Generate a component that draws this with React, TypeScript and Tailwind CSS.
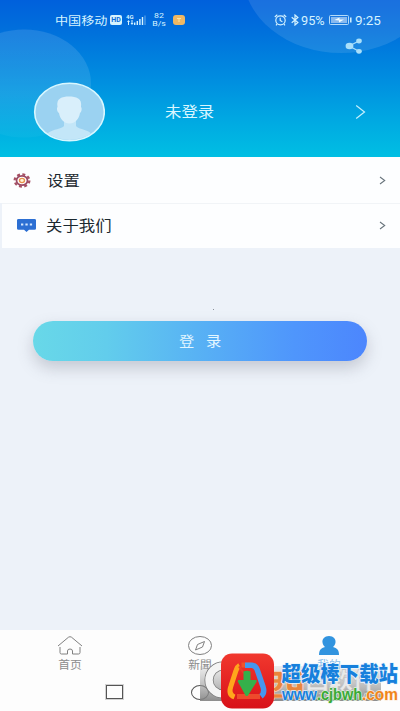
import type { ReactNode } from 'react';

// Wide text: the glyphs are stretched horizontally inside a box of fixed width.
function Wide({ className = '', children }: { className?: string; children: ReactNode }) {
  return (
    <span className={`inline-block origin-left whitespace-nowrap ${className}`}>{children}</span>
  );
}

function StatusBar() {
  return (
    <div className="relative flex h-10 items-center pl-[55px] text-[#d5f3ff]">
      <div className="w-[55px] pt-[3px] text-[11.5px] leading-none">
        <Wide className="scale-x-[1.14]">中国移动</Wide>
      </div>
      <div className="flex h-[10px] w-[12px] items-center justify-center rounded-[2px] bg-[#d5f3ff] text-[7px] font-bold leading-none text-[#0a6bd6]">
        HD
      </div>
      <svg className="ml-1 h-[12px] w-[20px]" viewBox="0 0 20 12" fill="currentColor">
        <text x="0" y="4.8" fontSize="6" fontWeight="700" textLength="7.5">4G</text>
        <path d="M1 8l1.500-2L4 8H3v3H2V8zM4.500 9h1V6h1v3h1L6 11zM8 8.500h1.400V11H8zM10.600 7H12v4h-1.400zM13.200 5h1.400v6h-1.400zM15.800 3h1.400v8h-1.400z" />
        <path d="M18.300 1.500h1.400V11h-1.400z" opacity=".35" />
      </svg>
      <div className="ml-[5px] w-[16px] text-center text-[8px] leading-[8.5px]">
        <div className="origin-center scale-x-110">82</div>
        <div className="origin-center scale-x-110">B/s</div>
      </div>
      <div className="ml-[6px] flex h-[10px] w-[12px] items-center justify-center rounded-[3px] bg-[#efb864]">
        <svg className="h-[6px] w-[6px]" viewBox="0 0 6 6" fill="none" stroke="#ffe4a0">
          <path d="M1 1.500h4M3 1.500V5" />
        </svg>
      </div>
      <svg className="ml-[89px] h-[12px] w-[13px]" viewBox="0 0 13 12" fill="none" stroke="currentColor" strokeWidth="1.200">
        <ellipse cx="6.500" cy="6.300" rx="4.700" ry="4.500" />
        <path d="M.8 3L3.300.8M12.200 3L9.700.8M6.200 3.700v2.800l2.200 1.200M3 10.200l-1 1.100M10 10.200l1 1.100" />
      </svg>
      <svg className="ml-[4px] h-[12px] w-[8px]" viewBox="0 0 8 12" fill="none" stroke="currentColor" strokeWidth="1.200">
        <path d="M.7 3.200l6.200 5.300L4 11V1l2.900 2.500L.7 8.800" />
      </svg>
      <div className="ml-[2px] w-[28px] pt-[2px] text-[12px] leading-none">
        <Wide className="scale-x-[1.06]">95%</Wide>
      </div>
      <svg className="h-[10px] w-[23px]" viewBox="0 0 23 10" fill="none">
        <rect x=".5" y=".5" width="19" height="9" rx="1" stroke="#b5dcfa" />
        <rect x="2" y="2" width="16" height="6" fill="#88b9ef" />
        <path d="M5.500 5l5-2.500V4.500h4.500l-5 3V5.500z" fill="#f1fcff" />
        <path d="M21.800 2.500v5" stroke="#d5f3ff" strokeWidth="1.500" />
      </svg>
      <div className="ml-[3px] w-[26px] pt-[2px] text-[12px] leading-none">
        <Wide className="scale-x-[1.12]">9:25</Wide>
      </div>
    </div>
  );
}

function Header() {
  return (
    <header className="relative h-[157px] overflow-hidden bg-[linear-gradient(180deg,#0060dc_0%,#0072dc_22%,#008fe0_52%,#00a8e2_76%,#00bfe3_100%)]">
      <svg className="absolute inset-0 h-[157px] w-[400px]" viewBox="0 0 400 157">
        <defs>
          <linearGradient id="bubble" x1="0" y1="0" x2="0" y2="1">
            <stop offset="0" stopColor="#fff" stopOpacity=".12" />
            <stop offset=".6" stopColor="#fff" stopOpacity=".1" />
            <stop offset="1" stopColor="#fff" stopOpacity=".03" />
          </linearGradient>
        </defs>
        <ellipse cx="24" cy="83.500" rx="67" ry="54" fill="url(#bubble)" />
        <ellipse cx="341" cy="-26" rx="98" ry="79" fill="#fff" fillOpacity=".1" />
      </svg>
      <StatusBar />
      <div className="relative -mt-[2px] flex justify-end pr-[38px]">
        <svg className="h-4 w-[17px]" viewBox="0 0 17 16" fill="#a9dffa" stroke="#a9dffa">
          <path d="M14 3L4 8l10 5.300" fill="none" strokeWidth="1.200" />
          <ellipse cx="4.500" cy="8" rx="3.900" ry="3.300" stroke="none" />
          <ellipse cx="14" cy="3" rx="2.800" ry="2.400" stroke="none" />
          <ellipse cx="14" cy="13.300" rx="2.800" ry="2.400" stroke="none" />
        </svg>
      </div>
      <div className="relative mt-[27px] flex h-[61px] items-center pl-[33px]">
        <svg className="h-[60px] w-[72px]" viewBox="0 0 72 60">
          <defs>
            <clipPath id="face">
              <ellipse cx="36.500" cy="30" rx="34" ry="28" />
            </clipPath>
          </defs>
          <ellipse cx="36.500" cy="30" rx="34.800" ry="28.700" fill="#9bd2f1" stroke="#d8f7ff" strokeWidth="1.600" />
          <g clipPath="url(#face)">
            <path d="M31 39h12v5c2 3 9 3 14 6.500L60 60H13l2-9c5-4 14-4 16-7z" fill="#c3e6f8" />
            <path d="M24.500 25C23 16 29 14.500 36 14.500S49.500 16 48 25c1.200 1 .7 5-1 6-1 6-5 10.500-10.500 10.500S27 37 26 31c-2-1-2.500-5-1.500-6z" fill="#d9effb" />
          </g>
        </svg>
        <div className="ml-[60px] flex-1 pt-[4px] text-[14.500px] leading-none text-[#d9f6ff]">
          <Wide className="scale-x-[1.130]">未登录</Wide>
        </div>
        <svg className="mr-[34px] h-[16px] w-[11px]" viewBox="0 0 11 16" fill="none" stroke="#c5f0fd" strokeWidth="1.200">
          <path d="M1.200 1.500L9.500 8l-8.300 6.500" />
        </svg>
      </div>
    </header>
  );
}

function RowArrow() {
  return (
    <svg className="h-[9px] w-[7px]" viewBox="0 0 7 9" fill="none" stroke="#69747c" strokeWidth="1.100">
      <path d="M1 1l4.700 3.500L1 8" />
    </svg>
  );
}

function GearIcon() {
  return (
    <svg className="h-[15px] w-[18px]" viewBox="0 0 18 15">
      <ellipse cx="9" cy="7.500" rx="7.400" ry="6.100" fill="none" stroke="#a65062" strokeWidth="2.200" strokeDasharray="2.900 2.400" />
      <ellipse cx="9" cy="7.500" rx="5.500" ry="4.700" fill="#fff" stroke="#9b4a66" strokeWidth="1.800" />
      <ellipse cx="9" cy="7.500" rx="2.500" ry="2.100" fill="#fff6d8" stroke="#e8914d" strokeWidth="1.400" />
    </svg>
  );
}

function ChatIcon() {
  return (
    <svg className="h-[13px] w-[19px]" viewBox="0 0 19 13">
      <path d="M1.500 0h16q1.500 0 1.500 1.300v8.200q0 1.300-1.500 1.300H12L9.500 13 7 10.800H1.500Q0 10.800 0 9.500V1.300Q0 0 1.500 0z" fill="#2c6fd3" />
      <path d="M4 4.500h2.300v2H4zM8.400 4.500h2.300v2H8.400zM12.800 4.500h2.300v2h-2.300z" fill="#d4e7ff" />
    </svg>
  );
}

function Menu() {
  return (
    <div className="text-[14.500px] leading-none text-[#1c2930]">
      <div className="flex h-[46px] items-center bg-[#fdfeff] pl-[13px] pr-[14px]">
        <GearIcon />
        <div className="ml-[16px] flex-1 pt-[4px]">
          <Wide className="scale-x-[1.130]">设置</Wide>
        </div>
        <RowArrow />
      </div>
      <div className="ml-[2px] flex h-[45px] items-center bg-[#fdfeff] pl-[15px] pr-[14px] shadow-[inset_0_1px_0_#f1f4f7]">
        <ChatIcon />
        <div className="ml-[10px] flex-1 pt-[4px]">
          <Wide className="scale-x-[1.130]">关于我们</Wide>
        </div>
        <RowArrow />
      </div>
    </div>
  );
}

function TabBar() {
  return (
    <nav className="h-[81px] bg-[#fdfdfd] text-[11px] leading-none text-[#8c8c8c]">
      <div className="flex h-[41px] pt-[6px]">
        <div className="ml-[57px] flex w-[26px] flex-col items-center">
          <svg className="h-[19px] w-[26px]" viewBox="0 0 26 19" fill="none" stroke="#808080" strokeWidth="1">
            <path d="M1 10L11.500 1.200q1.500-1 3 0L25 10M3 11v5.500q0 1.500 1.500 1.500h6v-3q0-2 2.500-2t2.500 2v3h6q1.500 0 1.500-1.500V11" />
          </svg>
          <span className="mt-[5px] scale-x-[1.070] whitespace-nowrap">首页</span>
        </div>
        <div className="ml-[104px] flex w-[26px] flex-col items-center">
          <svg className="h-[19px] w-[26px]" viewBox="0 0 26 19" fill="none" stroke="#808080" strokeWidth="1">
            <ellipse cx="13" cy="9.500" rx="11.500" ry="9" />
            <path d="M17.500 5.500l-2 5.500-7 3 2-5.500z" />
          </svg>
          <span className="mt-[5px] scale-x-[1.070] whitespace-nowrap">新聞</span>
        </div>
        <div className="ml-[103px] flex w-[26px] flex-col items-center text-[#8cc0ea]">
          <svg className="h-[19px] w-[20px]" viewBox="0 0 20 19" fill="#3294df">
            <path d="M10 0c4.500 0 7 3 6.500 6.500-.3 2-1.500 3.500-2.500 4.500 4 1 6 3 6 8H0c0-5 2-7 6-8-1-1-2.200-2.500-2.500-4.500C3 3 5.500 0 10 0z" />
          </svg>
          <span className="mt-[5px] scale-x-[1.070] whitespace-nowrap">我的</span>
        </div>
      </div>
      <div className="flex h-[40px] items-center pl-[106px] pt-[2px]">
        <div className="h-[14px] w-[17px] border border-[#555] outline outline-[#55555540]" />
        <div className="ml-[68px] h-[15px] w-[18px] rounded-[50%] border-[1.500px] border-[#555]" />
      </div>
    </nav>
  );
}

function Watermark() {
  return (
    <svg className="absolute bottom-0 right-0 h-[61px] w-[200px]" viewBox="0 0 200 61">
      <defs>
        <linearGradient id="plate" x1="0" y1="0" x2="0" y2="1">
          <stop offset="0" stopColor="#aaa" stopOpacity=".2" />
          <stop offset="1" stopColor="#808080" stopOpacity=".9" />
        </linearGradient>
        <linearGradient id="tile" x1="0" y1="0" x2="0" y2="1">
          <stop offset="0" stopColor="#f1382e" />
          <stop offset="1" stopColor="#d81119" />
        </linearGradient>
      </defs>
      <path d="M0 16h181v35H0z" fill="url(#plate)" />
      <circle cx="23" cy="30" r="14" fill="none" stroke="#777" strokeWidth="9" />
      <circle cx="23" cy="30" r="14" fill="none" stroke="#f4f4f4" strokeWidth="7.500" />
      <text x="64" y="46" fontSize="30" fontWeight="900" fill="#e9853c" stroke="#f6d5bc" strokeWidth=".6" textLength="42" lengthAdjust="spacingAndGlyphs">西</text>
      <text x="105" y="38" fontSize="22" fontWeight="900" fill="#e8e8e8" stroke="#bbb" strokeWidth=".5" textLength="72" lengthAdjust="spacingAndGlyphs">西软件</text>
      <text x="102" y="49" fontSize="9" fontWeight="700" fill="#eee" stroke="#888" strokeWidth=".3" textLength="66" lengthAdjust="spacingAndGlyphs">CR173.COM</text>
      <rect x="21" y="3.500" width="53" height="55" rx="11" fill="url(#tile)" />
      {/* rounded triangle around the download arrow */}
      <g fill="none" strokeLinejoin="round" strokeWidth="5">
        <path d="M60 46.500H37" stroke="#ee4a2c" />
        <path d="M51 15H41.500" stroke="#f0542a" />
        <path d="M39.500 15.500q-2.500 1.500-3.500 5L30.800 36.500q-2.800 8 3.700 10.500" stroke="#ffa61c" />
        <path d="M45 15.200h7q3.500.3 5 4l6 17.500q2 6.500-2 9.500" stroke="#4597ee" strokeWidth="5.500" />
        <path d="M39 16.500l5 7" stroke="#ee3a2a" strokeWidth="2" />
      </g>
      <path d="M43.500 21.500q3.500-1.500 7 0V30h5.500q1.500.5.500 2L48 45.500q-1.300 1-2.500 0L38 32q-.7-1.500.5-2h5z" fill="#35b04a" />
      <g strokeLinejoin="round" paintOrder="stroke" strokeWidth="1.400">
        <text x="81.500" y="31" fontSize="21" fontWeight="900" fill="#1780dc" stroke="#e8f6ff" textLength="116.500" lengthAdjust="spacingAndGlyphs">超级棒下载站</text>
        <g fontSize="17" fontFamily="Liberation Sans, sans-serif" fontWeight="700">
          <text x="82" y="50" fill="#1780dc" stroke="#d8ecfa" textLength="35" lengthAdjust="spacingAndGlyphs">www</text>
          <text x="117" y="50" fill="#39a935" stroke="#def2dc" textLength="45" lengthAdjust="spacingAndGlyphs">.cjbwh</text>
          <text x="162" y="50" fill="#f08519" stroke="#fdeedd" textLength="36" lengthAdjust="spacingAndGlyphs">.com</text>
        </g>
      </g>
    </svg>
  );
}

export default function App() {
  return (
    <div className="relative flex h-[711px] w-[400px] flex-col overflow-hidden bg-[#edf2f9] font-['Roboto','Noto_Sans_CJK_SC',sans-serif]">
      <Header />
      <Menu />
      <main className="flex-1 px-[33px] pt-[61px]">
        <div className="ml-[180px] h-px w-px bg-[#8a9099]" />
        <button className="mt-[11px] flex h-[40px] w-[334px] items-center justify-center gap-[13px] rounded-full bg-[linear-gradient(90deg,#68d8e8_0%,#62cdec_22%,#57aff5_52%,#4f96fc_78%,#4c86fd_100%)] pt-[2px] text-[13.500px] leading-none text-[#e3f6ff] shadow-[0_7px_16px_rgba(90,95,110,0.28)]">
          <span className="scale-x-[1.130]">登</span>
          <span className="scale-x-[1.130]">录</span>
        </button>
      </main>
      <TabBar />
      <Watermark />
    </div>
  );
}
